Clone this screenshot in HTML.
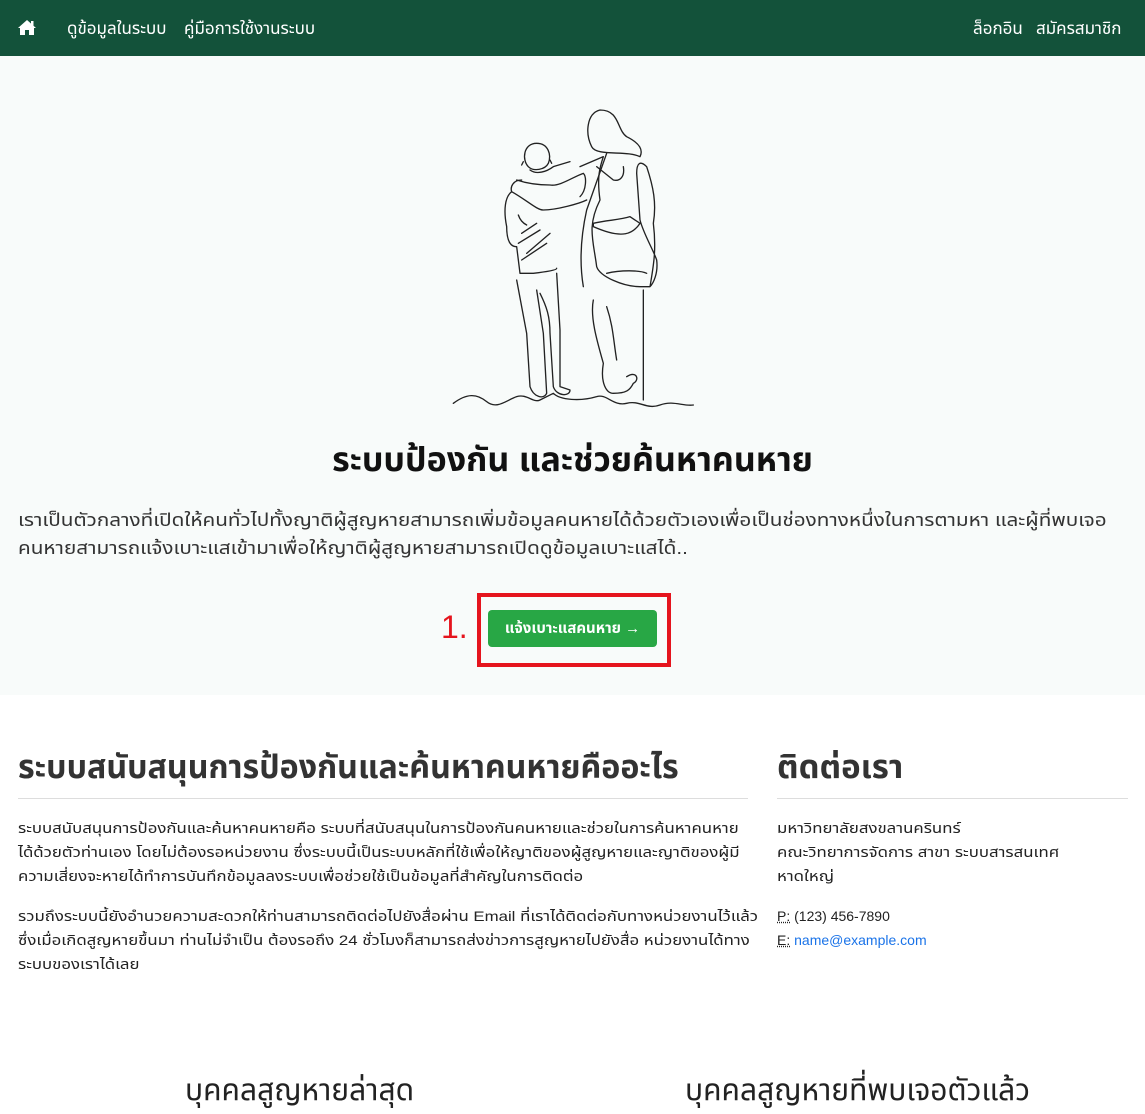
<!DOCTYPE html>
<html><head><meta charset="utf-8"><style>
*{margin:0;padding:0;box-sizing:border-box}
body{width:1145px;height:1080px;overflow:hidden;background:#fff;font-family:"Liberation Sans","Noto Sans Thai","Tahoma",sans-serif;color:#212529;position:relative}
.nav{position:absolute;left:0;top:0;width:1145px;height:56px;background:#13523a;color:#fff;font-size:17px}
.nav span{position:absolute;top:16px;white-space:nowrap}
.hero{position:absolute;left:0;top:56px;width:1145px;height:639px;background:#f8fbfa}
.abs{position:absolute;white-space:nowrap}
h1{font-size:34px;font-weight:bold;color:#111}
.p18{font-size:18px;line-height:28px;color:#333;transform:scaleX(1.15);transform-origin:left top}
.btn{position:absolute;left:488px;top:610px;width:169px;height:37px;background:#28a745;border-radius:4px;color:#fff;font-size:15px;font-weight:bold;text-align:center;line-height:37px}
.box{position:absolute;left:477px;top:593px;width:194px;height:74px;border:4px solid #e5141d}
h2{font-size:33px;font-weight:bold;color:#333}
.hr{position:absolute;height:1px;background:#ddd;top:798px}
.p14{font-size:14px;line-height:24px;color:#222;transform:scaleX(1.2);transform-origin:left top}
a{color:#1a73e8;text-decoration:none}
h3{font-size:30px;color:#222;font-weight:normal}
</style></head><body>
<div class="nav">
<svg style="position:absolute;left:17px;top:19px" width="20" height="17" viewBox="0 0 20 17"><path d="M10 1 L1 9 L3 9 L3 16 L8 16 L8 11 L12 11 L12 16 L17 16 L17 9 L19 9 Z" fill="#fff"/><rect x="14" y="2" width="2.5" height="5" fill="#fff"/></svg>
<span style="left:67px">ดูข้อมูลในระบบ</span>
<span style="left:184px">คู่มือการใช้งานระบบ</span>
<span style="left:973px">ล็อกอิน</span>
<span style="left:1036px">สมัครสมาชิก</span>
</div>
<div class="hero"></div>
<svg class="abs" style="left:440px;top:100px" width="270" height="320" viewBox="0 0 810 960" fill="none" stroke="#222" stroke-width="4" stroke-linejoin="round" stroke-linecap="round">
<path d="M40 910 C80 880 110 880 140 905 C170 930 200 900 230 890 C260 880 280 910 300 900 L340 880 C360 900 420 905 470 890 C500 880 520 920 560 910 C600 900 620 930 660 915 C700 900 730 920 760 915"/>
<path d="M290 130 C250 130 245 180 265 200 C280 215 315 210 325 190 C335 165 325 130 290 130 Z M250 185 L245 195 M330 180 L335 190 M270 210 C290 225 320 215 340 200 L390 185"/>
<path d="M245 240 C220 240 210 260 215 275 C195 290 190 330 200 380 C200 420 210 440 230 440 L240 520 L280 520 C320 515 350 510 350 505 M215 275 C260 300 290 330 310 330 C350 330 420 310 440 300 M230 240 C260 250 290 255 330 255 C360 260 400 230 430 220 C440 230 440 270 420 290"/>
<path d="M235 345 C240 360 250 370 260 375 M245 400 L290 370 M235 430 L300 390 M260 460 L330 400 M245 480 L320 430"/>
<path d="M230 540 L260 700 L270 860 C280 890 310 900 320 880 L310 700 L290 570 M300 580 C320 620 330 650 330 700 L340 860 C350 890 390 890 390 870 L360 860 L360 690 L350 520"/>
<path d="M480 30 C440 40 435 100 455 140 C470 170 560 150 600 170 C610 150 600 130 560 110 C530 90 540 30 480 30 Z"/>
<path d="M420 200 L490 170 C480 200 470 230 480 300 C440 380 460 420 470 500 C480 530 550 560 600 560 L630 560 C640 500 650 450 640 370 C650 310 640 260 620 200 C600 180 590 190 590 220 L600 360 C610 400 640 450 650 480 C655 520 640 550 630 560"/>
<path d="M470 200 L520 240 C540 245 555 230 550 200 M500 160 L440 330 C420 420 420 500 430 560"/>
<path d="M460 370 C500 360 540 360 570 350 L600 370 C580 400 550 420 460 380 Z M500 520 C540 510 600 510 620 520"/>
<path d="M460 600 C450 650 470 720 490 790 C480 850 500 880 520 880 C560 880 570 870 580 850 C600 840 590 810 560 830 M610 570 L610 900 M500 620 C520 680 520 720 530 780"/>
</svg>
<h1 class="abs" style="left:0;width:1145px;text-align:center;top:436px">ระบบป้องกัน และช่วยค้นหาคนหาย</h1>
<div class="abs p18" style="left:18px;top:506px">เราเป็นตัวกลางที่เปิดให้คนทั่วไปทั้งญาติผู้สูญหายสามารถเพิ่มข้อมูลคนหายได้ด้วยตัวเองเพื่อเป็นช่องทางหนึ่งในการตามหา และผู้ที่พบเจอ<br>คนหายสามารถแจ้งเบาะแสเข้ามาเพื่อให้ญาติผู้สูญหายสามารถเปิดดูข้อมูลเบาะแสได้..</div>
<div class="abs" style="left:441px;top:609px;font-size:32px;color:#e5141d;line-height:36px">1.</div>
<div class="box"></div>
<div class="btn">แจ้งเบาะแสคนหาย →</div>
<h2 class="abs" style="left:18px;top:743px;transform:scaleX(0.975);transform-origin:left top">ระบบสนับสนุนการป้องกันและค้นหาคนหายคืออะไร</h2>
<h2 class="abs" style="left:777px;top:743px">ติดต่อเรา</h2>
<div class="hr" style="left:18px;width:730px"></div>
<div class="hr" style="left:777px;width:351px"></div>
<div class="abs p14" style="left:18px;top:816px">ระบบสนับสนุนการป้องกันและค้นหาคนหายคือ ระบบที่สนับสนุนในการป้องกันคนหายและช่วยในการค้นหาคนหาย<br>ได้ด้วยตัวท่านเอง โดยไม่ต้องรอหน่วยงาน ซึ่งระบบนี้เป็นระบบหลักที่ใช้เพื่อให้ญาติของผู้สูญหายและญาติของผู้มี<br>ความเสี่ยงจะหายได้ทำการบันทึกข้อมูลลงระบบเพื่อช่วยใช้เป็นข้อมูลที่สำคัญในการติดต่อ</div>
<div class="abs p14" style="left:18px;top:904px">รวมถึงระบบนี้ยังอำนวยความสะดวกให้ท่านสามารถติดต่อไปยังสื่อผ่าน Email ที่เราได้ติดต่อกับทางหน่วยงานไว้แล้ว<br>ซึ่งเมื่อเกิดสูญหายขึ้นมา ท่านไม่จำเป็น ต้องรอถึง 24 ชั่วโมงก็สามารถส่งข่าวการสูญหายไปยังสื่อ หน่วยงานได้ทาง<br>ระบบของเราได้เลย</div>
<div class="abs p14" style="left:777px;top:816px">มหาวิทยาลัยสงขลานครินทร์<br>คณะวิทยาการจัดการ สาขา ระบบสารสนเทศ<br>หาดใหญ่</div>
<div class="abs p14" style="left:777px;top:904px;transform:none"><u style="text-decoration-style:dotted">P:</u> (123) 456-7890<br><u style="text-decoration-style:dotted">E:</u> <a>name@example.com</a></div>
<h3 class="abs" style="left:185px;top:1068px">บุคคลสูญหายล่าสุด</h3>
<h3 class="abs" style="left:685px;top:1068px">บุคคลสูญหายที่พบเจอตัวแล้ว</h3>
</body></html>
